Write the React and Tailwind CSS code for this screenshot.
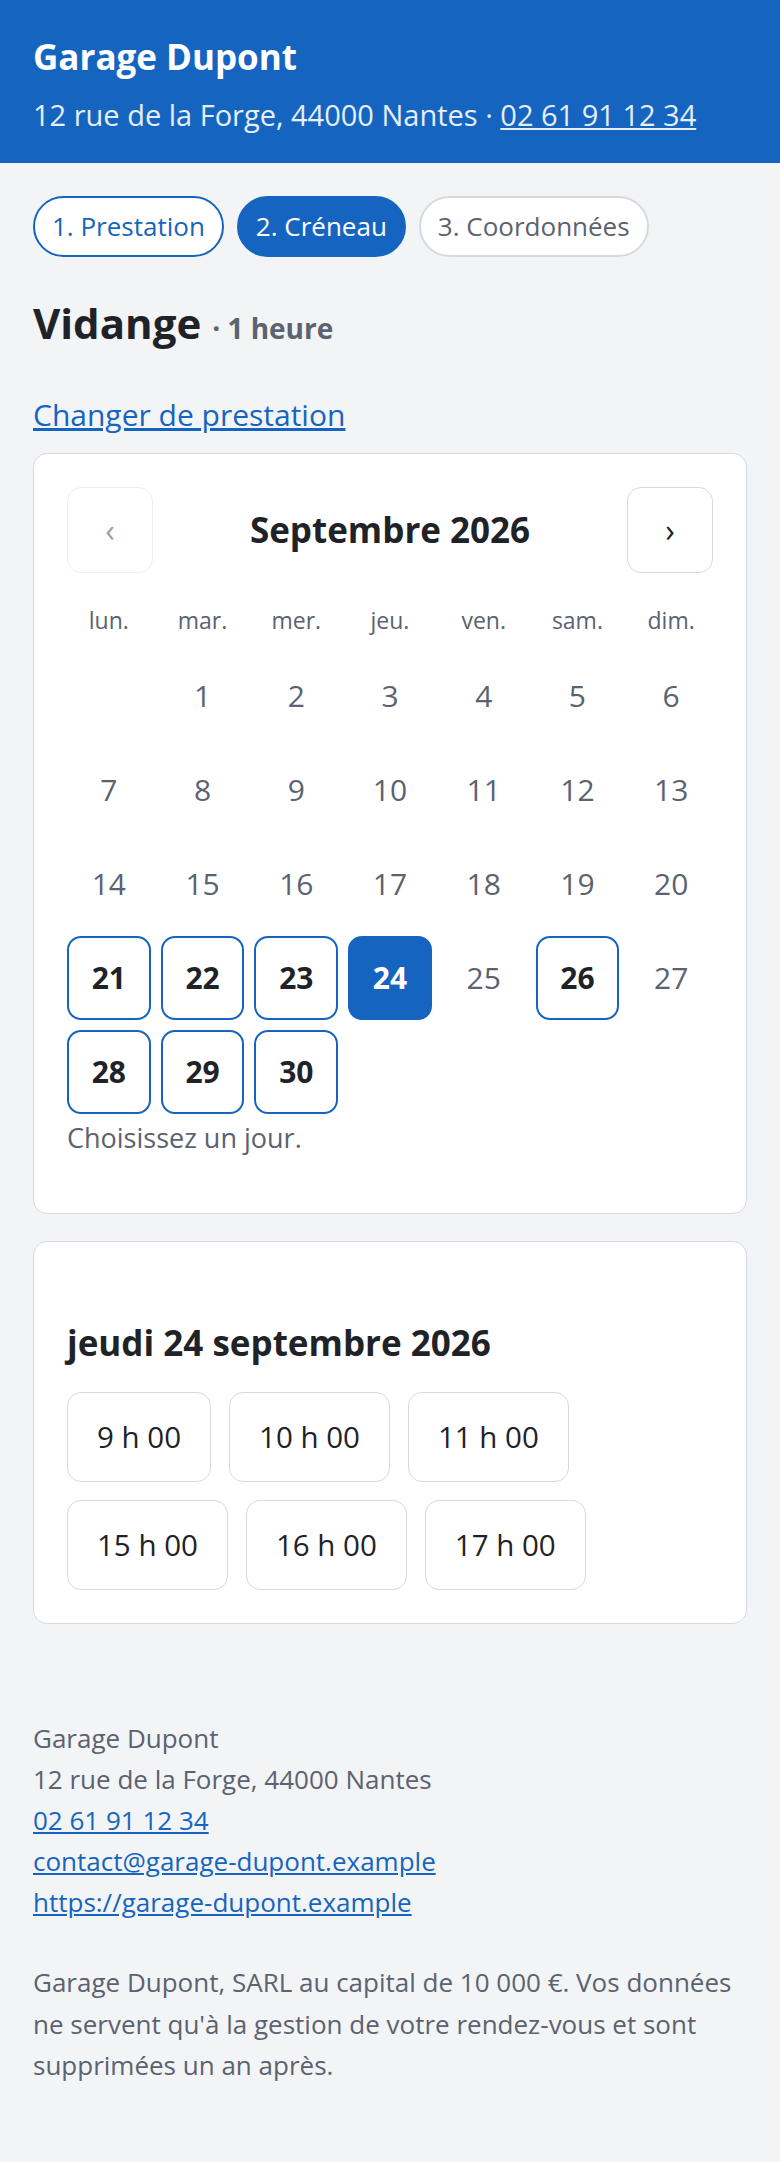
import { useState } from 'react';

const weekdays = ['lun.', 'mar.', 'mer.', 'jeu.', 'ven.', 'sam.', 'dim.'];
const openDays = [21, 22, 23, 24, 26, 28, 29, 30];
const slots = ['9 h 00', '10 h 00', '11 h 00', '15 h 00', '16 h 00', '17 h 00'];

const DayCell = ({ day, selected, onPick }) => {
  if (!day) return <div />;
  const open = openDays.includes(day);
  if (!open) {
    return (
      <div className="flex h-[84px] items-center justify-center text-[30px] text-[#5b6270]">
        {day}
      </div>
    );
  }
  return (
    <button
      onClick={() => onPick(day)}
      className={
        selected
          ? 'flex h-[84px] items-center justify-center rounded-[14px] border-2 border-[#1565c0] bg-[#1565c0] text-[30px] font-bold text-white'
          : 'flex h-[84px] items-center justify-center rounded-[14px] border-2 border-[#1565c0] bg-white text-[30px] font-bold text-[#1f2328]'
      }
    >
      {day}
    </button>
  );
};

const App = () => {
  const [selectedDay, setSelectedDay] = useState(24);
  const cells = [null, ...Array.from({ length: 30 }, (_, i) => i + 1)];

  return (
    <div className="min-h-screen bg-[#f3f4f6] font-['Open_Sans',sans-serif] text-[#1f2328]">
      <header className="bg-[#1565c0] px-[33px] pt-[36px] pb-[26px] text-white">
        <h1 className="text-[35px] font-bold leading-[1.2]">Garage Dupont</h1>
        <p className="mt-[15px] text-[29px] leading-[1.5] text-[#e6eefa]">
          12 rue de la Forge, 44000 Nantes ·{' '}
          <a href="#" className="underline">02 61 91 12 34</a>
        </p>
      </header>

      <main className="px-[33px]">
        <nav className="mt-[33px] flex gap-[13px]">
          <span className="flex h-[61px] items-center rounded-full border-2 border-[#1565c0] bg-white px-[17px] text-[26px] text-[#1565c0]">
            1. Prestation
          </span>
          <span className="flex h-[61px] items-center rounded-full border-2 border-[#1565c0] bg-[#1565c0] px-[17px] text-[26px] text-white">
            2. Créneau
          </span>
          <span className="flex h-[61px] items-center rounded-full border-2 border-[#d5d9e0] bg-white px-[17px] text-[26px] text-[#5b6270]">
            3. Coordonnées
          </span>
        </nav>

        <h2 className="mt-[41px] text-[42px] font-bold leading-[1.2]">
          Vidange <span className="text-[28px] text-[#5b6270]">· 1 heure</span>
        </h2>

        <a href="#" className="mt-[44px] block text-[30px] leading-[1.5] text-[#1565c0] underline">
          Changer de prestation
        </a>

        <section className="mt-[16px] rounded-[14px] border-[1.5px] border-[#d5d9e0] bg-white p-[33px] pb-[55px]">
          <div className="flex h-[86px] items-center justify-between">
            <button className="flex h-[86px] w-[86px] items-center justify-center rounded-[14px] border-[1.5px] border-[#eceef2] text-[32px] text-[#9aa0aa]">
              ‹
            </button>
            <h3 className="text-[35px] font-bold leading-[1.2]">Septembre 2026</h3>
            <button className="flex h-[86px] w-[86px] items-center justify-center rounded-[14px] border-[1.5px] border-[#d5d9e0] text-[32px] text-[#1f2328]">
              ›
            </button>
          </div>

          <div className="mt-[30px] grid h-[34px] grid-cols-7 gap-x-[10px]">
            {weekdays.map(w => (
              <div key={w} className="flex items-center justify-center text-[23px] text-[#5b6270]">
                {w}
              </div>
            ))}
          </div>

          <div className="mt-[17px] grid grid-cols-7 gap-[10px]">
            {cells.map((d, i) => (
              <DayCell key={i} day={d} selected={d === selectedDay} onPick={setSelectedDay} />
            ))}
          </div>

          <p className="mt-[4px] text-[27px] leading-[1.5] text-[#5b6270]">Choisissez un jour.</p>
        </section>

        <section className="mt-[27px] rounded-[14px] border-[1.5px] border-[#d5d9e0] bg-white p-[33px]">
          <h3 className="mt-[47px] text-[35px] font-bold leading-[1.2]">jeudi {selectedDay} septembre 2026</h3>
          <div className="mt-[28px] flex flex-wrap gap-[18px]">
            {slots.map(s => (
              <button
                key={s}
                className="h-[90px] rounded-[14px] border-[1.5px] border-[#d5d9e0] bg-white px-[29px] text-[29.5px] text-[#1f2328]"
              >
                {s}
              </button>
            ))}
          </div>
        </section>
      </main>

      <footer className="px-[33px] pt-[94px] pb-[76px] text-[26px] leading-[41px] text-[#5b6270]">
        <div>Garage Dupont</div>
        <div>12 rue de la Forge, 44000 Nantes</div>
        <div><a href="#" className="text-[#1565c0] underline">02 61 91 12 34</a></div>
        <div><a href="#" className="text-[#1565c0] underline">contact@garage-dupont.example</a></div>
        <div><a href="#" className="text-[#1565c0] underline">https://garage-dupont.example</a></div>
        <p className="mt-[39px] leading-[41.5px]">
          Garage Dupont, SARL au capital de 10 000 €. Vos données ne servent qu'à la gestion de votre rendez-vous et sont supprimées un an après.
        </p>
      </footer>
    </div>
  );
};

export default App;
